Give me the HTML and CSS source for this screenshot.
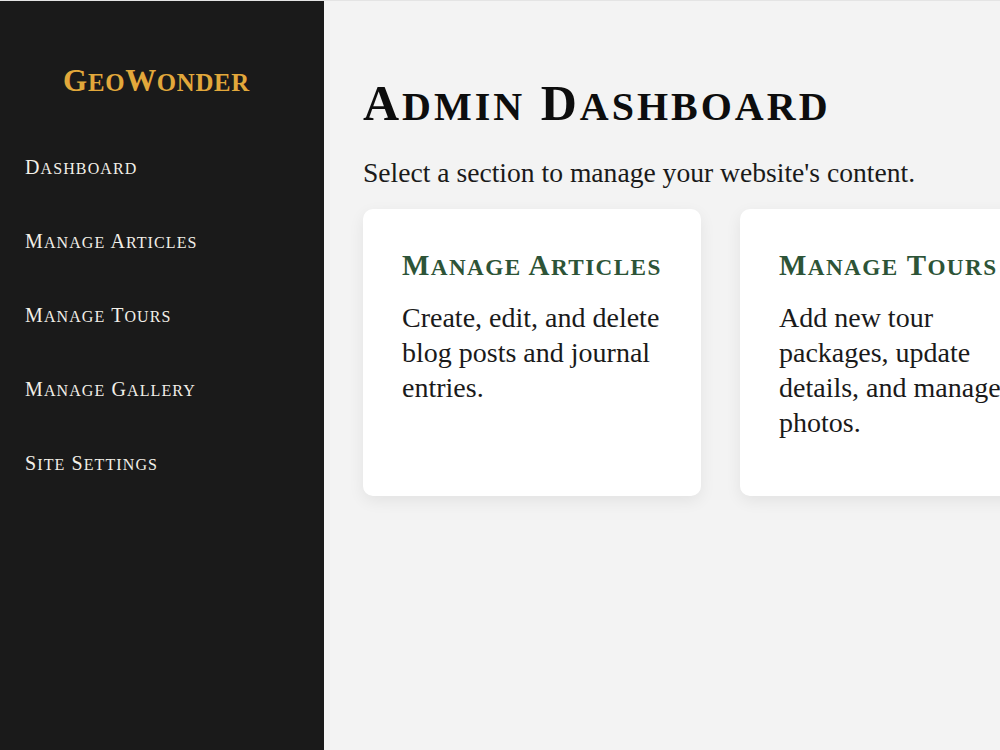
FILE: index.html
```html
<!DOCTYPE html>
<html lang="en">
<head>
<meta charset="utf-8">
<title>GeoWonder Admin</title>
<link rel="stylesheet" href="styles.css">
</head>
<body>
<div class="layout">
  <aside class="sidebar">
    <div class="logo">G<span class="sc">eo</span>W<span class="sc">onder</span></div>
    <nav class="nav">
      <a href="#" class="nav-link">D<span class="sc">ashboard</span></a>
      <a href="#" class="nav-link">M<span class="sc">anage</span> A<span class="sc">rticles</span></a>
      <a href="#" class="nav-link">M<span class="sc">anage</span> T<span class="sc">ours</span></a>
      <a href="#" class="nav-link">M<span class="sc">anage</span> G<span class="sc">allery</span></a>
      <a href="#" class="nav-link">S<span class="sc">ite</span> S<span class="sc">ettings</span></a>
    </nav>
  </aside>
  <main class="main">
    <h1 class="page-title">A<span class="sc">dmin</span> D<span class="sc">ashboard</span></h1>
    <p class="page-intro">Select a section to manage your website's content.</p>
    <div class="cards">
      <section class="card">
        <h2 class="card-title">M<span class="sc">anage</span> A<span class="sc">rticles</span></h2>
        <p class="card-text">Create, edit, and delete blog posts and journal entries.</p>
      </section>
      <section class="card">
        <h2 class="card-title">M<span class="sc">anage</span> T<span class="sc">ours</span></h2>
        <p class="card-text">Add new tour packages, update details, and manage photos.</p>
      </section>
      <section class="card">
        <h2 class="card-title">M<span class="sc">anage</span> G<span class="sc">allery</span></h2>
        <p class="card-text">Upload and organise images for the gallery.</p>
      </section>
    </div>
  </main>
</div>
</body>
</html>
```
FILE: styles.css
```css
html, body {
  margin: 0;
  padding: 0;
  height: 100%;
}

body {
  font-family: "Liberation Serif", "DejaVu Serif", serif;
  background: #f3f3f3;
  color: #1a1a1a;
  overflow: hidden;
}

/* small capitals for the display headings */
.sc {
  text-transform: uppercase;
  font-size: 0.8em;
}

.layout {
  display: flex;
  height: 100%;
  border-top: 1px solid #e4e4e4;
  box-sizing: border-box;
}

/* Sidebar */
.sidebar {
  flex: 0 0 324px;
  background: #1a1a1a;
  display: flex;
  flex-direction: column;
}

.logo {
  font-weight: bold;
  font-size: 31px;
  color: #e2a83b;
  text-align: center;
  padding: 60px 11px 0 0;
  line-height: 40px;
  letter-spacing: 0.7px;
  white-space: nowrap;
}

.nav {
  display: flex;
  flex-direction: column;
  padding: 50px 0 0 25px;
  gap: 44px;
}

.nav-link {
  color: #f2efe8;
  text-decoration: none;
  font-size: 20px;
  line-height: 28px;
  letter-spacing: 1.1px;
  white-space: nowrap;
}

/* Main area */
.main {
  flex: 1;
  min-width: 0;
  padding: 70px 0 0 39px;
  overflow: hidden;
}

.page-title {
  margin: 0;
  font-weight: bold;
  font-size: 50px;
  line-height: 64px;
  letter-spacing: 3px;
  color: #0d0d0d;
  white-space: nowrap;
}

.page-intro {
  margin: 17px 0 0;
  font-size: 27.6px;
  line-height: 34px;
  color: #1a1a1a;
  white-space: nowrap;
}

.cards {
  display: flex;
  gap: 39px;
  margin-top: 19px;
}

.card {
  flex: 0 0 338px;
  box-sizing: border-box;
  height: 287px;
  background: #ffffff;
  border-radius: 10px;
  padding: 37px 39px;
  box-shadow: 0 5px 16px rgba(0, 0, 0, 0.07);
}

.card-title {
  margin: 0;
  font-weight: bold;
  font-size: 29px;
  line-height: 38px;
  letter-spacing: 1.4px;
  color: #2d5437;
  white-space: nowrap;
}

.card-text {
  margin: 14px 0 0;
  font-size: 28px;
  line-height: 35px;
  color: #1a1a1a;
}
```
